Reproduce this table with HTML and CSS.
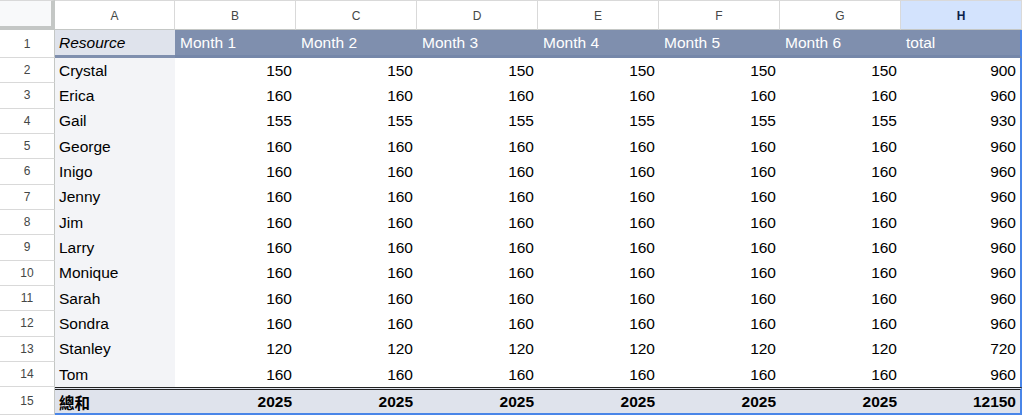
FILE: index.html
```html
<!DOCTYPE html>
<html>
<head>
<meta charset="utf-8">
<link rel="stylesheet" href="styles.css">
</head>
<body>
<div class="sheet" id="sheet">
  <div class="corner"></div>
  <div class="ch">A</div><div class="ch">B</div><div class="ch">C</div><div class="ch">D</div><div class="ch">E</div><div class="ch">F</div><div class="ch">G</div><div class="ch sel">H</div>

  <div class="rh rh1">1</div>
  <div class="hd hd-a">Resource</div>
  <div class="hd">Month 1</div><div class="hd">Month 2</div><div class="hd">Month 3</div><div class="hd">Month 4</div><div class="hd">Month 5</div><div class="hd">Month 6</div><div class="hd last">total</div>

  <div class="rh">2</div><div class="nm">Crystal</div><div class="n">150</div><div class="n">150</div><div class="n">150</div><div class="n">150</div><div class="n">150</div><div class="n">150</div><div class="n last">900</div>
  <div class="rh">3</div><div class="nm">Erica</div><div class="n">160</div><div class="n">160</div><div class="n">160</div><div class="n">160</div><div class="n">160</div><div class="n">160</div><div class="n last">960</div>
  <div class="rh">4</div><div class="nm">Gail</div><div class="n">155</div><div class="n">155</div><div class="n">155</div><div class="n">155</div><div class="n">155</div><div class="n">155</div><div class="n last">930</div>
  <div class="rh">5</div><div class="nm">George</div><div class="n">160</div><div class="n">160</div><div class="n">160</div><div class="n">160</div><div class="n">160</div><div class="n">160</div><div class="n last">960</div>
  <div class="rh">6</div><div class="nm">Inigo</div><div class="n">160</div><div class="n">160</div><div class="n">160</div><div class="n">160</div><div class="n">160</div><div class="n">160</div><div class="n last">960</div>
  <div class="rh">7</div><div class="nm">Jenny</div><div class="n">160</div><div class="n">160</div><div class="n">160</div><div class="n">160</div><div class="n">160</div><div class="n">160</div><div class="n last">960</div>
  <div class="rh">8</div><div class="nm">Jim</div><div class="n">160</div><div class="n">160</div><div class="n">160</div><div class="n">160</div><div class="n">160</div><div class="n">160</div><div class="n last">960</div>
  <div class="rh">9</div><div class="nm">Larry</div><div class="n">160</div><div class="n">160</div><div class="n">160</div><div class="n">160</div><div class="n">160</div><div class="n">160</div><div class="n last">960</div>
  <div class="rh">10</div><div class="nm">Monique</div><div class="n">160</div><div class="n">160</div><div class="n">160</div><div class="n">160</div><div class="n">160</div><div class="n">160</div><div class="n last">960</div>
  <div class="rh">11</div><div class="nm">Sarah</div><div class="n">160</div><div class="n">160</div><div class="n">160</div><div class="n">160</div><div class="n">160</div><div class="n">160</div><div class="n last">960</div>
  <div class="rh">12</div><div class="nm">Sondra</div><div class="n">160</div><div class="n">160</div><div class="n">160</div><div class="n">160</div><div class="n">160</div><div class="n">160</div><div class="n last">960</div>
  <div class="rh">13</div><div class="nm">Stanley</div><div class="n">120</div><div class="n">120</div><div class="n">120</div><div class="n">120</div><div class="n">120</div><div class="n">120</div><div class="n last">720</div>
  <div class="rh">14</div><div class="nm">Tom</div><div class="n">160</div><div class="n">160</div><div class="n">160</div><div class="n">160</div><div class="n">160</div><div class="n">160</div><div class="n last">960</div>

  <div class="rh rh15">15</div>
  <div class="tt tt-a">總和</div><div class="tt">2025</div><div class="tt">2025</div><div class="tt">2025</div><div class="tt">2025</div><div class="tt">2025</div><div class="tt">2025</div><div class="tt last">12150</div>
</div>
</body>
</html>
```
FILE: styles.css
```css
html, body {
  margin: 0;
  padding: 0;
  background: #ffffff;
}
body {
  font-family: "Liberation Sans", Arial, "Noto Sans CJK TC", sans-serif;
  color: #000;
  width: 1024px;
  height: 416px;
  overflow: hidden;
}
.sheet {
  display: grid;
  grid-template-columns: 55px 120px repeat(7, 121px);
  grid-template-rows: 30px 28px repeat(13, 25.33px) 28px;
}
.sheet > div {
  box-sizing: border-box;
  display: flex;
  align-items: center;
  font-size: 15.5px;
  white-space: nowrap;
  overflow: hidden;
}
.corner {
  background: #f8f9fa;
  border-top: 1px solid #d9d9d9;
  border-right: 4px solid #c4c7c5;
  border-bottom: 4px solid #c4c7c5;
}
.ch {
  justify-content: center;
  font-size: 12px !important;
  color: #444746;
  background: #fff;
  border-top: 1px solid #d9d9d9;
  border-right: 1px solid #d9d9d9;
  border-bottom: 1px solid #c4c7c5;
  padding-top: 1px;
}
.ch.sel {
  background: #d3e3fd;
  color: #0b1f4a;
  font-weight: bold;
}
.rh {
  justify-content: center;
  font-size: 12px !important;
  color: #444746;
  background: #fff;
  border-right: 1px solid #c4c7c5;
  border-bottom: 1px solid #d9d9d9;
}
.hd {
  background: #7f8fae;
  color: #fff;
  padding-left: 5px;
  border-bottom: 3px solid #7587a9;
}
.hd-a {
  background: #dfe3ec;
  color: #000;
  font-style: italic;
  padding-left: 4px;
  border-bottom: 3px solid #7f8fae;
}
.nm {
  background: #f3f4f7;
  padding-left: 4px;
}
.n {
  background: #fff;
  justify-content: flex-end;
  padding-right: 4px;
}
.tt {
  background: #dfe3ec;
  font-weight: bold;
  justify-content: flex-end;
  padding-right: 4px;
  border-top: 3px double #222;
  border-bottom: 2px solid #4a86e8;
}
.tt-a {
  justify-content: flex-start;
  padding-left: 4px;
  padding-right: 0;
}
.last {
  border-right: 2px solid #4a86e8;
}
.n.last, .tt.last {
  padding-right: 4px;
}
.rh15 {
  border-bottom: 1px solid #d9d9d9;
}
```
